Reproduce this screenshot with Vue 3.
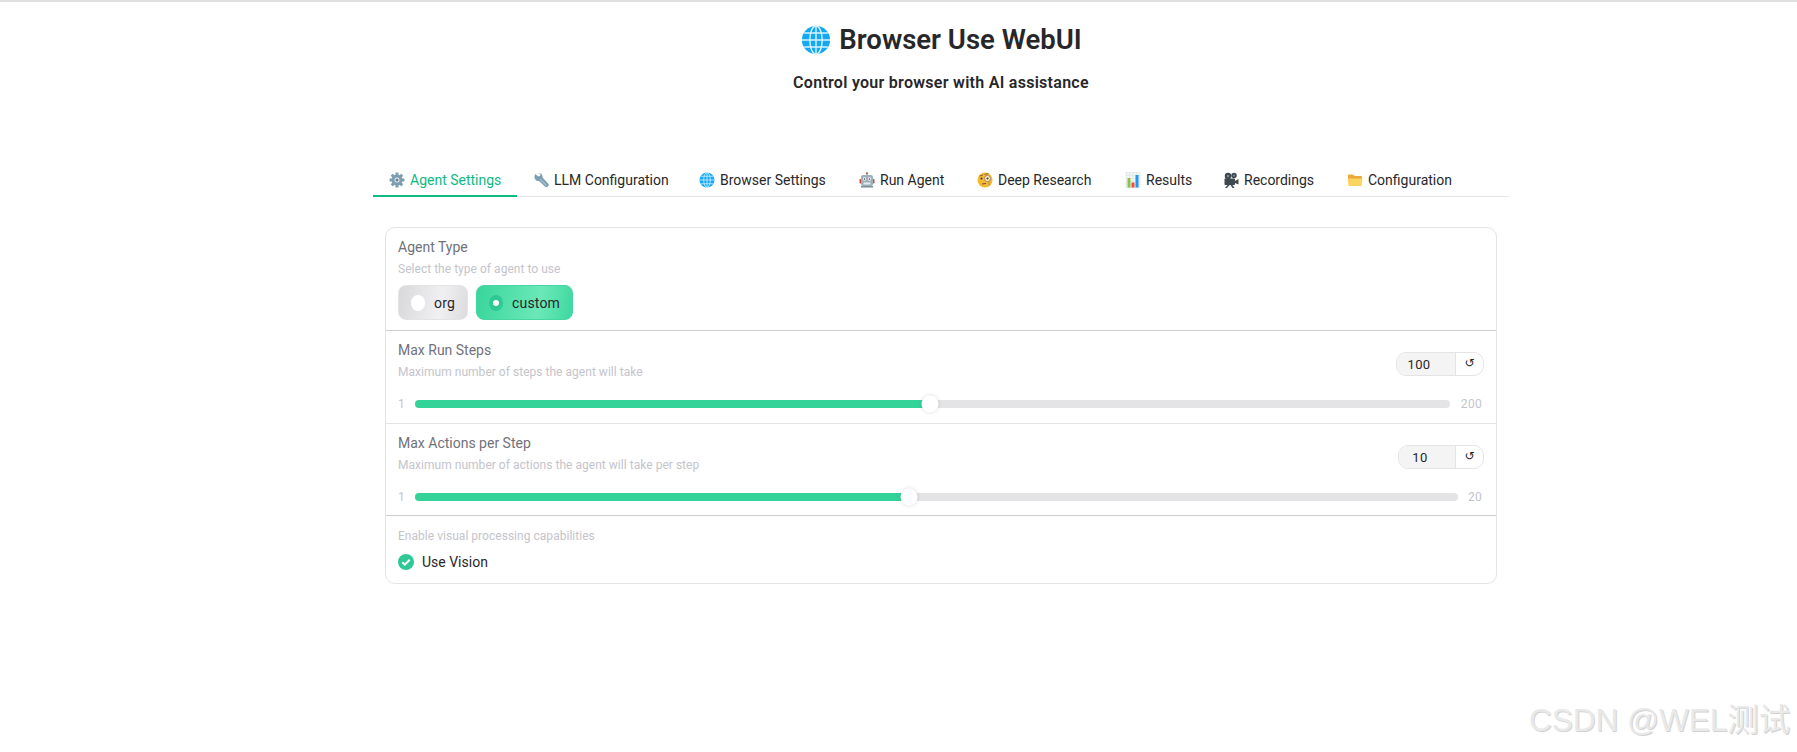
<script setup>
const tabs = [
  { id: 'gear', label: 'Agent Settings', width: 144, active: true },
  { id: 'wrench', label: 'LLM Configuration', width: 166 },
  { id: 'globe', label: 'Browser Settings', width: 160 },
  { id: 'robot', label: 'Run Agent', width: 118 },
  { id: 'face', label: 'Deep Research', width: 148 },
  { id: 'chart', label: 'Results', width: 98 },
  { id: 'camera', label: 'Recordings', width: 124 },
  { id: 'folder', label: 'Configuration', width: 136 }
]
const sliders = [
  { label: 'Max Run Steps', desc: 'Maximum number of steps the agent will take', value: 100, max: 200, pct: 49.75, inputW: 59, gap: 11, rule: 'light' },
  { label: 'Max Actions per Step', desc: 'Maximum number of actions the agent will take per step', value: 10, max: 20, pct: 47.37, inputW: 57, gap: 10, rule: 'strong' }
]
</script>

<template>
  <div class="page">
    <div class="shell">
      <header class="head">
        <h1 class="title">
          <svg class="title-globe" viewBox="0 0 32 32"><use href="#ic-globe" /></svg>
          <span>Browser Use WebUI</span>
        </h1>
        <h3 class="subtitle">Control your browser with AI assistance</h3>
      </header>

      <svg width="0" height="0" class="defs">
        <defs>
          <symbol id="ic-globe" viewBox="0 0 32 32">
            <circle cx="16" cy="16" r="15" fill="#12a8f3" />
            <g fill="none" stroke="#d9f2fe" stroke-width="1.5">
              <ellipse cx="16" cy="16" rx="6.6" ry="15" />
              <path d="M16 1v30M1 16h30M3.4 8.5h25.2M3.4 23.5h25.2" />
            </g>
          </symbol>
        </defs>
      </svg>

      <nav class="tabs">
        <button v-for="t in tabs" :key="t.id" class="tab" :class="{ on: t.active }" :style="{ width: t.width + 'px' }">
          <svg class="emoji" viewBox="0 0 32 32">
            <template v-if="t.id === 'gear'">
              <g fill="#7f9fb1">
                <circle cx="16" cy="16" r="11" />
                <rect v-for="a in [0, 45, 90, 135, 180, 225, 270, 315]" :key="a" x="13" y="1" width="6" height="8" rx="1" :transform="`rotate(${a} 16 16)`" />
              </g>
              <circle cx="16" cy="16" r="5" fill="#e8eef2" />
              <circle cx="16" cy="16" r="3" fill="#5f8093" />
            </template>
            <template v-else-if="t.id === 'wrench'">
              <path d="M4 3l5 5 4-1 1-4-5-2c5-1 10 3 9 9l12 13c2 3-3 8-6 6L11 17C5 18 1 12 2 7z" transform="translate(1 1)" fill="#7b9db0" />
              <path d="M15 13l13 13-2 2L13 15z" fill="#a3bdcb" />
            </template>
            <use v-else-if="t.id === 'globe'" href="#ic-globe" />
            <template v-else-if="t.id === 'robot'">
              <rect x="15" y="1" width="2" height="5" fill="#7b8d96" />
              <circle cx="16" cy="2.5" r="2" fill="#d1493f" />
              <rect x="1" y="14" width="4" height="9" rx="1.5" fill="#d1493f" />
              <rect x="27" y="14" width="4" height="9" rx="1.5" fill="#d1493f" />
              <rect x="4" y="6" width="24" height="22" rx="4" fill="#9db1bb" />
              <circle cx="11" cy="14" r="3.4" fill="#fff" /><circle cx="11" cy="14" r="1.7" fill="#37474f" />
              <circle cx="21" cy="14" r="3.4" fill="#fff" /><circle cx="21" cy="14" r="1.7" fill="#37474f" />
              <rect x="9" y="21" width="14" height="4" rx="1" fill="#e5ecef" />
              <rect x="4" y="28" width="24" height="3" fill="#7b8d96" />
            </template>
            <template v-else-if="t.id === 'face'">
              <circle cx="16" cy="16" r="15" fill="#f4b92f" />
              <circle cx="21" cy="13" r="6" fill="#fdf3cf" stroke="#8d6e63" stroke-width="1.6" />
              <circle cx="21" cy="13" r="2.2" fill="#4e342e" />
              <circle cx="9" cy="13" r="2.2" fill="#4e342e" />
              <path d="M5 8l7-2M15 5l8-2" stroke="#6d4c41" stroke-width="1.6" fill="none" />
              <path d="M10 24l8-1" stroke="#6d4c41" stroke-width="2" fill="none" />
              <path d="M24 19v8" stroke="#8d6e63" stroke-width="1.2" />
            </template>
            <template v-else-if="t.id === 'chart'">
              <rect x="2" y="1" width="28" height="30" fill="#f2f5f6" stroke="#d3dbdf" />
              <path d="M2 7h28M2 13h28M2 19h28M2 25h28M9 1v30M16 1v30M23 1v30" stroke="#d9e0e3" stroke-width="1" />
              <rect x="5" y="12" width="6" height="19" fill="#8bc34a" />
              <rect x="13" y="21" width="6" height="10" fill="#ef4f41" />
              <rect x="21" y="6" width="6" height="25" fill="#2196f3" />
            </template>
            <template v-else-if="t.id === 'camera'">
              <g fill="#3f4a50">
                <circle cx="10" cy="8" r="6.5" />
                <circle cx="22" cy="7" r="5.5" />
                <rect x="3" y="13" width="21" height="13" rx="1.5" />
                <path d="M24 18l7-4v11l-7-3zM9 26h4l-5 6H4zM15 26h4l4 6h-4z" />
              </g>
              <circle cx="10" cy="8" r="2.4" fill="#78909c" /><circle cx="22" cy="7" r="2" fill="#78909c" />
            </template>
            <template v-else-if="t.id === 'folder'">
              <path d="M2 7a2 2 0 0 1 2-2h8l3 3h13a2 2 0 0 1 2 2v4H2z" fill="#eda83a" />
              <path d="M1 13h30l-2 15H3z" fill="#fcd462" />
            </template>
          </svg>
          <span class="tab-text">{{ t.label }}</span>
        </button>
      </nav>

      <main class="card">
        <section class="block rule-strong first">
          <div class="label">Agent Type</div>
          <div class="desc">Select the type of agent to use</div>
          <div class="radios">
            <label class="radio off"><span class="dot"></span><span>org</span></label>
            <label class="radio sel"><span class="dot"><i></i></span><span>custom</span></label>
          </div>
        </section>

        <section v-for="s in sliders" :key="s.label" class="block slider-block" :class="s.rule === 'strong' ? 'rule-strong' : 'rule-light'">
          <div class="slider-top">
            <div>
              <div class="label">{{ s.label }}</div>
              <div class="desc">{{ s.desc }}</div>
            </div>
            <div class="num">
              <span class="num-val" :style="{ width: s.inputW + 'px' }">{{ s.value }}</span>
              <span class="num-reset">↺</span>
            </div>
          </div>
          <div class="slider-row">
            <span class="min">1</span>
            <div class="track">
              <div class="fill" :style="{ width: s.pct + '%' }"></div>
              <div class="thumb" :style="{ left: s.pct + '%' }"></div>
            </div>
            <span class="max" :style="{ marginLeft: s.gap + 'px' }">{{ s.max }}</span>
          </div>
        </section>

        <section class="block last">
          <div class="desc">Enable visual processing capabilities</div>
          <label class="check">
            <svg class="check-box" viewBox="0 0 16 16">
              <circle cx="8" cy="8" r="8" fill="#2ec995" />
              <path d="M4.3 8.3l2.5 2.4 4.9-5" fill="none" stroke="#fff" stroke-width="2" />
            </svg>
            <span>Use Vision</span>
          </label>
        </section>
      </main>
    </div>
    <div class="watermark">CSDN @WEL测试</div>
  </div>
</template>

<style>
body { margin: 0; background: #fff; }
</style>

<style scoped>
.page {
  position: relative;
  height: 752px;
  box-sizing: border-box;
  border-top: 2px solid #dfdfdf;
  overflow: hidden;
  font-family: Roboto, "Noto Sans", sans-serif;
  color: #27272a;
}
.defs { position: absolute; }
.shell { width: 1136px; margin-left: 373px; }
.head { height: 167px; box-sizing: border-box; padding-top: 22px; text-align: center; }
.title {
  margin: 0;
  padding-left: 1px;
  display: flex;
  justify-content: center;
  align-items: center;
  gap: 8px;
  font-size: 27.5px;
  line-height: 32px;
  font-weight: 600;
}
.title-globe { width: 30px; height: 30px; }
.subtitle {
  margin: 16px 0 0;
  font-size: 16px;
  line-height: 22px;
  font-weight: 600;
  letter-spacing: 0.28px;
}
.tabs { display: flex; box-sizing: border-box; height: 28px; border-bottom: 1px solid #e4e4e7; }
.tab {
  box-sizing: border-box;
  height: 28px;
  padding: 0 0 4px 16px;
  border: 0;
  border-bottom: 2px solid transparent;
  background: none;
  display: flex;
  align-items: center;
  font: inherit;
  font-size: 14px;
  color: #27272a;
  white-space: nowrap;
}
.tab.on { color: #10b981; border-bottom-color: #10b981; }
.emoji { width: 16px; height: 16px; flex: none; margin-right: 5px; }

.card {
  width: 1112px;
  box-sizing: border-box;
  margin: 30px 0 0 12px;
  border: 1px solid #e4e4e7;
  border-radius: 10px;
}
.block { padding: 0 12px; box-sizing: border-box; }
.rule-strong { border-bottom: 1px solid #cfcfd3; }
.rule-light { border-bottom: 1px solid #e4e4e7; }
.first { height: 103px; padding-top: 9px; }
.slider-block { height: 93px; padding-top: 9px; }
.slider-block.rule-strong { height: 92px; }
.last { height: 67px; padding-top: 12px; }
.label { font-size: 14px; line-height: 20px; color: #71717a; }
.desc { font-size: 12px; line-height: 16px; margin-top: 4px; color: #c4c4cc; letter-spacing: 0.03px; }
.last .desc { margin-top: 0; }
.radios { display: flex; gap: 8px; margin-top: 8px; }
.radio {
  box-sizing: border-box;
  height: 35px;
  display: flex;
  align-items: center;
  gap: 8px;
  padding: 0 12px;
  border-radius: 8px;
  font-size: 14px;
  color: #27272a;
  letter-spacing: 0.15px;
}
.radio .dot { width: 16px; height: 16px; border-radius: 50%; margin-right: 1px; display: flex; align-items: center; justify-content: center; }
.off { width: 70px; border: 1px solid #e4e4e7; background: linear-gradient(100deg, #d8d8db, #f0f0f2 60%, #dcdcdf); }
.off .dot { background: #fff; }
.sel { width: 97px; border: 1px solid #45d6a4; background: linear-gradient(100deg, #38d69b, #6ce8b8 65%, #3dd89f); }
.sel .dot { background: #2ec995; }
.sel .dot i { width: 6px; height: 6px; border-radius: 50%; background: #fff; }
.slider-top { display: flex; justify-content: space-between; align-items: flex-start; }
.num {
  display: flex;
  align-items: stretch;
  height: 24px;
  box-sizing: border-box;
  margin-top: 12px;
  border: 1px solid #e4e4e7;
  border-radius: 10px;
  overflow: hidden;
  font-size: 13px;
}
.num-val {
  box-sizing: border-box;
  background: #f4f4f5;
  text-align: center;
  line-height: 24px;
  border-right: 1px solid #e4e4e7;
  padding-right: 14px;
  letter-spacing: 0.4px;
}
.num-reset { width: 27px; text-align: center; line-height: 20px; font-size: 12px; color: #27272a; font-family: "DejaVu Sans", sans-serif; }
.slider-row { display: flex; align-items: center; margin-top: 16px; padding-right: 2px; height: 16px; font-size: 12px; color: #c4c4cc; letter-spacing: 0.3px; }
.min { width: 17px; }
.track { position: relative; flex: 1; height: 8px; border-radius: 4px; background: #e4e4e7; }
.fill { height: 100%; border-radius: 4px 0 0 4px; background: #34d399; }
.thumb {
  position: absolute;
  top: 50%;
  width: 17px;
  height: 17px;
  transform: translate(-50%, -50%);
  border-radius: 50%;
  background: #fff;
  box-shadow: 0 0 4px rgba(0, 0, 0, 0.14);
}
.check { display: flex; align-items: center; gap: 8px; margin-top: 8px; font-size: 14px; line-height: 20px; }
.check-box { width: 16px; height: 16px; }
.watermark {
  position: absolute;
  left: 1529px;
  top: 700px;
  font-family: "Liberation Sans", "Noto Sans CJK SC", sans-serif;
  font-size: 31.5px;
  line-height: 36px;
  color: #e9e9e9;
  white-space: nowrap;
  text-shadow: 1px 1px 0 #d2d2d2;
}
</style>
